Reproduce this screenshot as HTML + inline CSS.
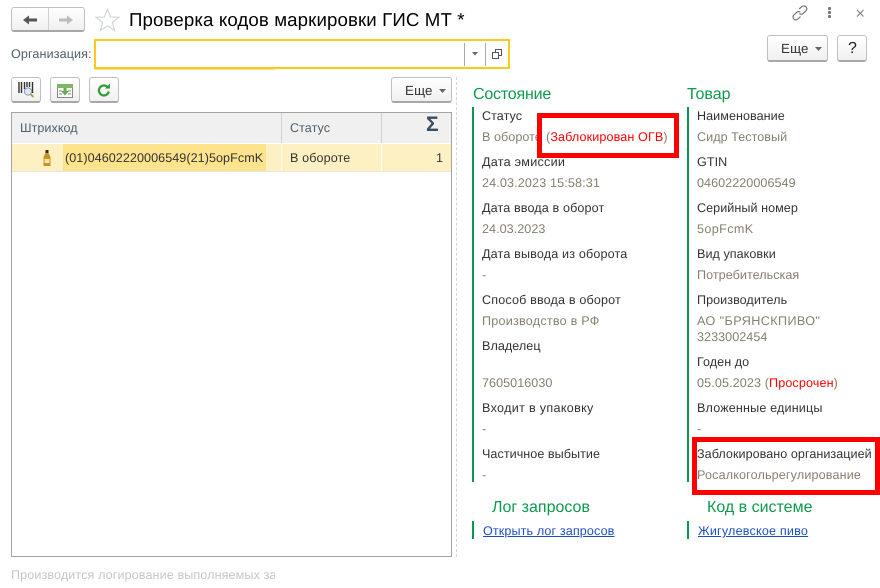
<!DOCTYPE html>
<html><head><meta charset="utf-8">
<style>
html,body{margin:0;padding:0;background:#fff}
body{width:880px;height:588px;position:relative;overflow:hidden;font-family:"Liberation Sans",sans-serif;font-size:12.6px;color:#333;text-rendering:geometricPrecision}
.a{position:absolute}
.t{position:absolute;white-space:nowrap;line-height:16px;letter-spacing:.04px}
.l{color:#333}
.v{color:#85806f}
.g{color:#0e9a4e;font-size:16px;line-height:20px;letter-spacing:0}
.b{position:absolute;box-sizing:border-box;border:1px solid #c0c0c0;border-bottom:2px solid #a8a8a8;border-radius:3px;background:linear-gradient(#fff,#f0f0f0)}
.bar{position:absolute;background:#0a9a4f;width:2px}
.red{position:absolute;box-sizing:border-box;border:5px solid #f00}
a{color:#1d4fc4;text-decoration:underline}
svg{position:absolute;overflow:visible}
</style></head><body>

<!-- nav -->
<div class="b" style="left:11px;top:7px;width:74px;height:25px"></div>
<div class="a" style="left:48px;top:8px;width:1px;height:22px;background:#d0d0d0"></div>
<svg style="left:22px;top:14px" width="16" height="12"><path d="M1 6 L7 1.5 V4.5 H15 V7.5 H7 V10.5 Z" fill="#555"/></svg>
<svg style="left:57px;top:14px" width="16" height="12"><path d="M16 6 L10 1.5 V4.5 H2 V7.5 H10 V10.5 Z" fill="#bbb"/></svg>
<svg style="left:95px;top:7px" width="26" height="25"><path d="M12.5 2 L15.5 10 L24 10.3 L17.3 15.5 L19.6 23.5 L12.5 18.8 L5.4 23.5 L7.7 15.5 L1 10.3 L9.5 10 Z" fill="#fff" stroke="#d3d7da" stroke-width="1.2"/></svg>
<div class="t" style="left:129px;top:9px;font-size:18.67px;line-height:22px;color:#000;letter-spacing:.12px">Проверка кодов маркировки ГИС МТ *</div>

<!-- window icons -->
<svg style="left:791px;top:4px" width="18" height="18" fill="none" stroke="#777" stroke-width="1.2"><path d="M8 5 L11 2.5 Q13 1 15 2.8 Q16.6 4.8 15 6.8 L12 9.6 Q10 11 8.4 9.6"/><path d="M9.6 12.6 L6.6 15.2 Q4.6 16.6 2.8 15 Q1.2 13 2.8 11 L5.8 8.2 Q7.8 6.8 9.4 8.2"/></svg>
<div class="a" style="left:828px;top:7px;width:3px;height:3px;background:#777;box-shadow:0 4px 0 #777,0 8px 0 #777;border-radius:1px"></div>
<svg style="left:857px;top:10px" width="7" height="7" stroke="#777" stroke-width="1"><path d="M0 0 L6.5 6.5 M6.5 0 L0 6.5"/></svg>

<!-- top right buttons -->
<div class="b" style="left:767px;top:35px;width:61px;height:27px"></div>
<div class="t" style="left:781px;top:41px;font-size:13.3px;letter-spacing:.2px">Еще</div>
<svg style="left:815px;top:47px" width="7" height="4"><path d="M0 0 H7 L3.5 4 Z" fill="#666"/></svg>
<div class="b" style="left:837px;top:35px;width:30px;height:27px"></div>
<div class="t" style="left:848px;top:41px;font-size:16px;color:#222;letter-spacing:0">?</div>

<!-- org -->
<div class="t" style="left:11px;top:46px;color:#4f5f6a;letter-spacing:.1px">Организация:</div>
<div class="a" style="left:94px;top:39px;width:416px;height:30px;box-sizing:border-box;border:2px solid #fcc81c;background:#fff"></div>
<div class="a" style="left:94px;top:69px;width:181px;height:1px;background:#fde08a"></div>
<div class="a" style="left:464px;top:43px;width:1px;height:23px;background:#aaa"></div>
<div class="a" style="left:485px;top:43px;width:1px;height:23px;background:#aaa"></div>
<svg style="left:472px;top:52px" width="6" height="4"><path d="M0 0 H6 L3 3.5 Z" fill="#666"/></svg>
<svg style="left:492px;top:49px" width="10" height="10" fill="#fff" stroke="#555" stroke-width="1"><rect x="3.5" y=".5" width="6" height="6"/><rect x=".5" y="3.5" width="6" height="6"/></svg>

<!-- toolbar -->
<div class="b" style="left:11px;top:77px;width:30px;height:26px"></div>
<svg style="left:18px;top:82px" width="18" height="17"><path d="M1 0 V11 M3.5 0 V11 M6.5 0 V7 M9 0 V5 M11.5 0 V5 M14.5 0 V11" stroke="#333" stroke-width="1.4"/><circle cx="10" cy="9.5" r="3.6" fill="#dbe9f6" stroke="#8a9aa8"/><path d="M12.6 12.2 L15.5 15" stroke="#c8932e" stroke-width="1.8"/></svg>
<div class="b" style="left:50px;top:77px;width:30px;height:26px"></div>
<svg style="left:57px;top:84px" width="16" height="14"><rect x=".5" y=".5" width="15" height="13" fill="#fff" stroke="#8a8a7a"/><rect x="0" y="0" width="16" height="4" fill="#7fb36a"/><path d="M2 7 H5 M2 10 H5 M11 7 H14 M11 10 H14" stroke="#8a8a7a"/><path d="M6.5 4 H9.5 V7 H12 L8 11.5 L4 7 H6.5 Z" fill="#5cb04a"/></svg>
<div class="b" style="left:89px;top:77px;width:30px;height:26px"></div>
<svg style="left:97px;top:83px" width="14" height="14" fill="none"><path d="M10.5 4 A5 5 0 1 0 11.8 8.5" stroke="#2f9e37" stroke-width="2.2"/><path d="M8 5.5 L13 5.5 L13 .5 Z" fill="#2f9e37"/></svg>
<div class="b" style="left:391px;top:77px;width:61px;height:26px"></div>
<div class="t" style="left:405px;top:83px;font-size:13.3px;letter-spacing:.2px">Еще</div>
<svg style="left:439px;top:89px" width="7" height="4"><path d="M0 0 H7 L3.5 4 Z" fill="#666"/></svg>

<!-- table -->
<div class="a" style="left:11px;top:112px;width:441px;height:445px;box-sizing:border-box;border:1px solid #a3a3a3;background:#fff"></div>
<div class="a" style="left:12px;top:113px;width:439px;height:30px;background:#f0f0f0"></div>
<div class="a" style="left:281px;top:113px;width:1px;height:30px;background:#d0d0d0"></div>
<div class="a" style="left:381px;top:113px;width:1px;height:30px;background:#d0d0d0"></div>
<div class="t" style="left:20px;top:120px;color:#4f5f6a">Штрихкод</div>
<div class="t" style="left:290px;top:120px;color:#4f5f6a">Статус</div>
<div class="t" style="left:426px;top:113px;font-size:21px;line-height:24px;font-weight:bold;color:#3a4d5e;letter-spacing:0">Σ</div>
<div class="a" style="left:12px;top:144px;width:439px;height:27px;background:#fdf1c4"></div>
<div class="a" style="left:63px;top:144px;width:203px;height:27px;background:#fee38d"></div>
<div class="a" style="left:281px;top:144px;width:1px;height:27px;background:#fff"></div>
<div class="a" style="left:381px;top:144px;width:1px;height:27px;background:#fff"></div>
<div class="a" style="left:12px;top:171px;width:439px;height:1px;background:#e6e6e6"></div>
<svg style="left:43px;top:150px" width="8" height="16"><rect x="2.5" y="0" width="3" height="3" fill="#3a2a10"/><path d="M2.5 3 H5.5 L7.5 7 V16 H.5 V7 Z" fill="#c9921c"/><rect x="1.5" y="9" width="5" height="4" fill="#efe3c0"/></svg>
<div class="t" style="left:65px;top:150px;color:#333;letter-spacing:.05px">(01)04602220006549(21)5opFcmK</div>
<div class="t" style="left:290px;top:150px;color:#333;letter-spacing:.1px">В обороте</div>
<div class="t" style="left:436px;top:150px;color:#333;letter-spacing:0">1</div>

<div class="a" style="left:456px;top:77px;height:480px;border-left:1px dashed #d6d6d6"></div>

<div class="t" style="left:11px;top:567px;color:#c9c3cc;width:264px;overflow:hidden;letter-spacing:.1px">Производится логирование выполняемых запросов</div>

<!-- left info -->
<div class="t g" style="left:473px;top:85px;letter-spacing:-.2px">Состояние</div>
<div class="bar" style="left:472px;top:107px;height:375px"></div>
<div class="t l" style="left:482px;top:108px">Статус</div>
<div class="t v" style="left:482px;top:129px">В обороте</div>
<div class="t l" style="left:482px;top:154px;letter-spacing:.25px">Дата эмиссии</div>
<div class="t v" style="left:482px;top:175px;letter-spacing:.13px">24.03.2023 15:58:31</div>
<div class="t l" style="left:482px;top:200px;letter-spacing:.12px">Дата ввода в оборот</div>
<div class="t v" style="left:482px;top:221px">24.03.2023</div>
<div class="t l" style="left:482px;top:246px;letter-spacing:.15px">Дата вывода из оборота</div>
<div class="t v" style="left:482px;top:267px">-</div>
<div class="t l" style="left:482px;top:292px;letter-spacing:.15px">Способ ввода в оборот</div>
<div class="t v" style="left:482px;top:313px;letter-spacing:.23px">Производство в РФ</div>
<div class="t l" style="left:482px;top:338px">Владелец</div>
<div class="t v" style="left:482px;top:375px">7605016030</div>
<div class="t l" style="left:482px;top:400px;letter-spacing:.31px">Входит в упаковку</div>
<div class="t v" style="left:482px;top:421px">-</div>
<div class="t l" style="left:482px;top:446px">Частичное выбытие</div>
<div class="t v" style="left:482px;top:467px">-</div>

<div class="a" style="left:537px;top:113px;width:142px;height:45px;background:#fff"></div>
<div class="t v" style="left:546px;top:129px;letter-spacing:.11px">(<span style="color:#f00">Заблокирован ОГВ</span>)</div>
<div class="red" style="left:537px;top:113px;width:142px;height:45px"></div>

<!-- right info -->
<div class="t g" style="left:687px;top:85px">Товар</div>
<div class="bar" style="left:687px;top:107px;height:375px"></div>
<div class="t l" style="left:697px;top:108px">Наименование</div>
<div class="t v" style="left:697px;top:129px">Сидр Тестовый</div>
<div class="t l" style="left:697px;top:154px">GTIN</div>
<div class="t v" style="left:697px;top:175px">04602220006549</div>
<div class="t l" style="left:697px;top:200px">Серийный номер</div>
<div class="t v" style="left:697px;top:221px;letter-spacing:.38px">5opFcmK</div>
<div class="t l" style="left:697px;top:246px">Вид упаковки</div>
<div class="t v" style="left:697px;top:267px">Потребительская</div>
<div class="t l" style="left:697px;top:292px">Производитель</div>
<div class="t v" style="left:697px;top:313px;letter-spacing:.41px">АО "БРЯНСКПИВО"</div>
<div class="t v" style="left:697px;top:329px">3233002454</div>
<div class="t l" style="left:697px;top:354px">Годен до</div>
<div class="t v" style="left:697px;top:375px;letter-spacing:.11px">05.05.2023 (<span style="color:#f00">Просрочен</span>)</div>
<div class="t l" style="left:697px;top:400px;letter-spacing:.15px">Вложенные единицы</div>
<div class="t v" style="left:697px;top:421px">-</div>
<div class="t l" style="left:697px;top:446px">Заблокировано организацией</div>
<div class="t v" style="left:697px;top:467px;letter-spacing:.14px">Росалкогольрегулирование</div>
<div class="red" style="left:692px;top:437px;width:188px;height:58px"></div>

<!-- bottom -->
<div class="t g" style="left:492px;top:498px">Лог запросов</div>
<div class="bar" style="left:472px;top:521px;height:18px"></div>
<div class="t" style="left:483px;top:523px;letter-spacing:.11px"><a>Открыть лог запросов</a></div>
<div class="t g" style="left:707px;top:498px">Код в системе</div>
<div class="bar" style="left:687px;top:521px;height:18px"></div>
<div class="t" style="left:698px;top:523px;letter-spacing:.19px"><a>Жигулевское пиво</a></div>
</body></html>
